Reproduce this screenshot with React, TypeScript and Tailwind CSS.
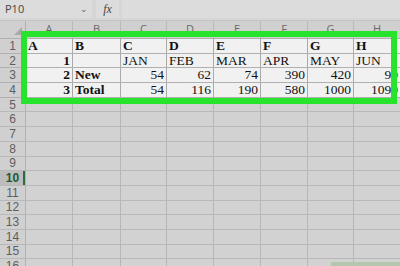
import React from "react";

const COLS = ["A", "B", "C", "D", "E", "F", "G", "H"];
const WIDTHS = ["w-[47px]", "w-[48px]", "w-[46px]", "w-[47px]", "w-[47px]", "w-[47px]", "w-[46px]", "w-[47px]"];

type Cell = { v: string; bold?: boolean; right?: boolean };

const TABLE: Cell[][] = [
  COLS.map((c) => ({ v: c, bold: true })),
  [{ v: "1", bold: true, right: true }, { v: "" }, { v: "JAN" }, { v: "FEB" }, { v: "MAR" }, { v: "APR" }, { v: "MAY" }, { v: "JUN" }],
  [
    { v: "2", bold: true, right: true },
    { v: "New", bold: true },
    { v: "54", right: true },
    { v: "62", right: true },
    { v: "74", right: true },
    { v: "390", right: true },
    { v: "420", right: true },
    { v: "90", right: true },
  ],
  [
    { v: "3", bold: true, right: true },
    { v: "Total", bold: true },
    { v: "54", right: true },
    { v: "116", right: true },
    { v: "190", right: true },
    { v: "580", right: true },
    { v: "1000", right: true },
    { v: "1090", right: true },
  ],
];

const ui = "font-['Open_Sans','Liberation_Sans',sans-serif]";
const rowFont = "font-['Liberation_Sans','Arial',sans-serif]";
const serif = "font-['Liberation_Serif','Times_New_Roman',serif]";

function RowHeader({ n }: { n: number }) {
  const active = n === 10;
  return (
    <div
      className={`w-[26px] shrink-0 flex items-center justify-center text-[12px] leading-none border-r border-[#b0b0b0] ${rowFont} ${
        active ? "bg-[#bdbdbd] text-[#1c5a32] font-bold relative" : "bg-[#d0d0d0] text-[#5e5e5e]"
      }`}
    >
      {n}
      {active && <div className="absolute right-0 top-0 bottom-0 w-[2px] bg-[#2f6b44]" />}
    </div>
  );
}

export default function App() {
  const emptyRows = Array.from({ length: 12 }, (_, i) => i + 5);
  return (
    <div className="w-[400px] h-[266px] overflow-hidden bg-[#d2d2d2] relative">
      {/* formula bar */}
      <div className="h-[21px] flex items-stretch bg-[#d6d6d6] border-b border-[#c4c4c4]">
        <div className={`w-[92px] h-[18px] bg-[#dcdcdc] flex items-center justify-between pl-[5px] pr-[4px] text-[11px] text-[#444] ${ui}`}>
          <span>P10</span>
          <span className="text-[9px] text-[#666]">⌄</span>
        </div>
        <div className="w-[4px]" />
        <div className={`w-[23px] h-[18px] bg-[#dcdcdc] flex items-center justify-center text-[12px] italic text-[#444] ${serif}`}>
          fx
        </div>
        <div className="w-[3px]" />
        <div className="flex-1 h-[18px] bg-[#dcdcdc]" />
      </div>

      {/* column headers */}
      <div className="h-[18px] flex bg-[#d0d0d0] border-b border-[#b0b0b0]">
        <div className="w-[26px] shrink-0 border-r border-[#b0b0b0] relative">
          <div className="absolute right-[3px] bottom-[3px] w-0 h-0 border-l-[8px] border-l-transparent border-b-[8px] border-b-[#a9a9a9]" />
        </div>
        {COLS.map((c, i) => (
          <div
            key={c}
            className={`${WIDTHS[i]} shrink-0 flex items-center justify-center text-[11px] text-[#6a6a6a] border-r border-[#bababa] ${ui}`}
          >
            {c}
          </div>
        ))}
      </div>

      {/* table rows */}
      {TABLE.map((row, r) => (
        <div key={r} className="h-[14.7px] flex border-b border-[#b0b0b0]">
          <RowHeader n={r + 1} />
          {row.map((cell, i) => (
            <div
              key={i}
              className={`${WIDTHS[i]} shrink-0 overflow-hidden whitespace-nowrap flex items-center px-[2px] bg-[#f1f1f1] border-r border-[#aaaaaa] text-[13.5px] leading-none text-[#111] ${serif} ${
                cell.bold ? "font-bold" : ""
              } ${cell.right ? "justify-end" : "justify-start"}`}
            >
              {cell.v}
            </div>
          ))}
        </div>
      ))}

      {/* empty rows */}
      {emptyRows.map((n) => (
        <div key={n} className="h-[14.7px] flex border-b border-[#b8b8b8]">
          <RowHeader n={n} />
          {COLS.map((c, i) => (
            <div key={c} className={`${WIDTHS[i]} shrink-0 border-r border-[#b6b6b6]`} />
          ))}
        </div>
      ))}

      {/* highlight frame */}
      <div className="absolute left-[21px] top-[31px] w-[376px] h-[73px] border-[6px] border-[#27e32c]" />
      <div className="absolute left-[331px] top-[262px] w-[69px] h-[4px] bg-[#b4c6ad]" />
    </div>
  );
}
